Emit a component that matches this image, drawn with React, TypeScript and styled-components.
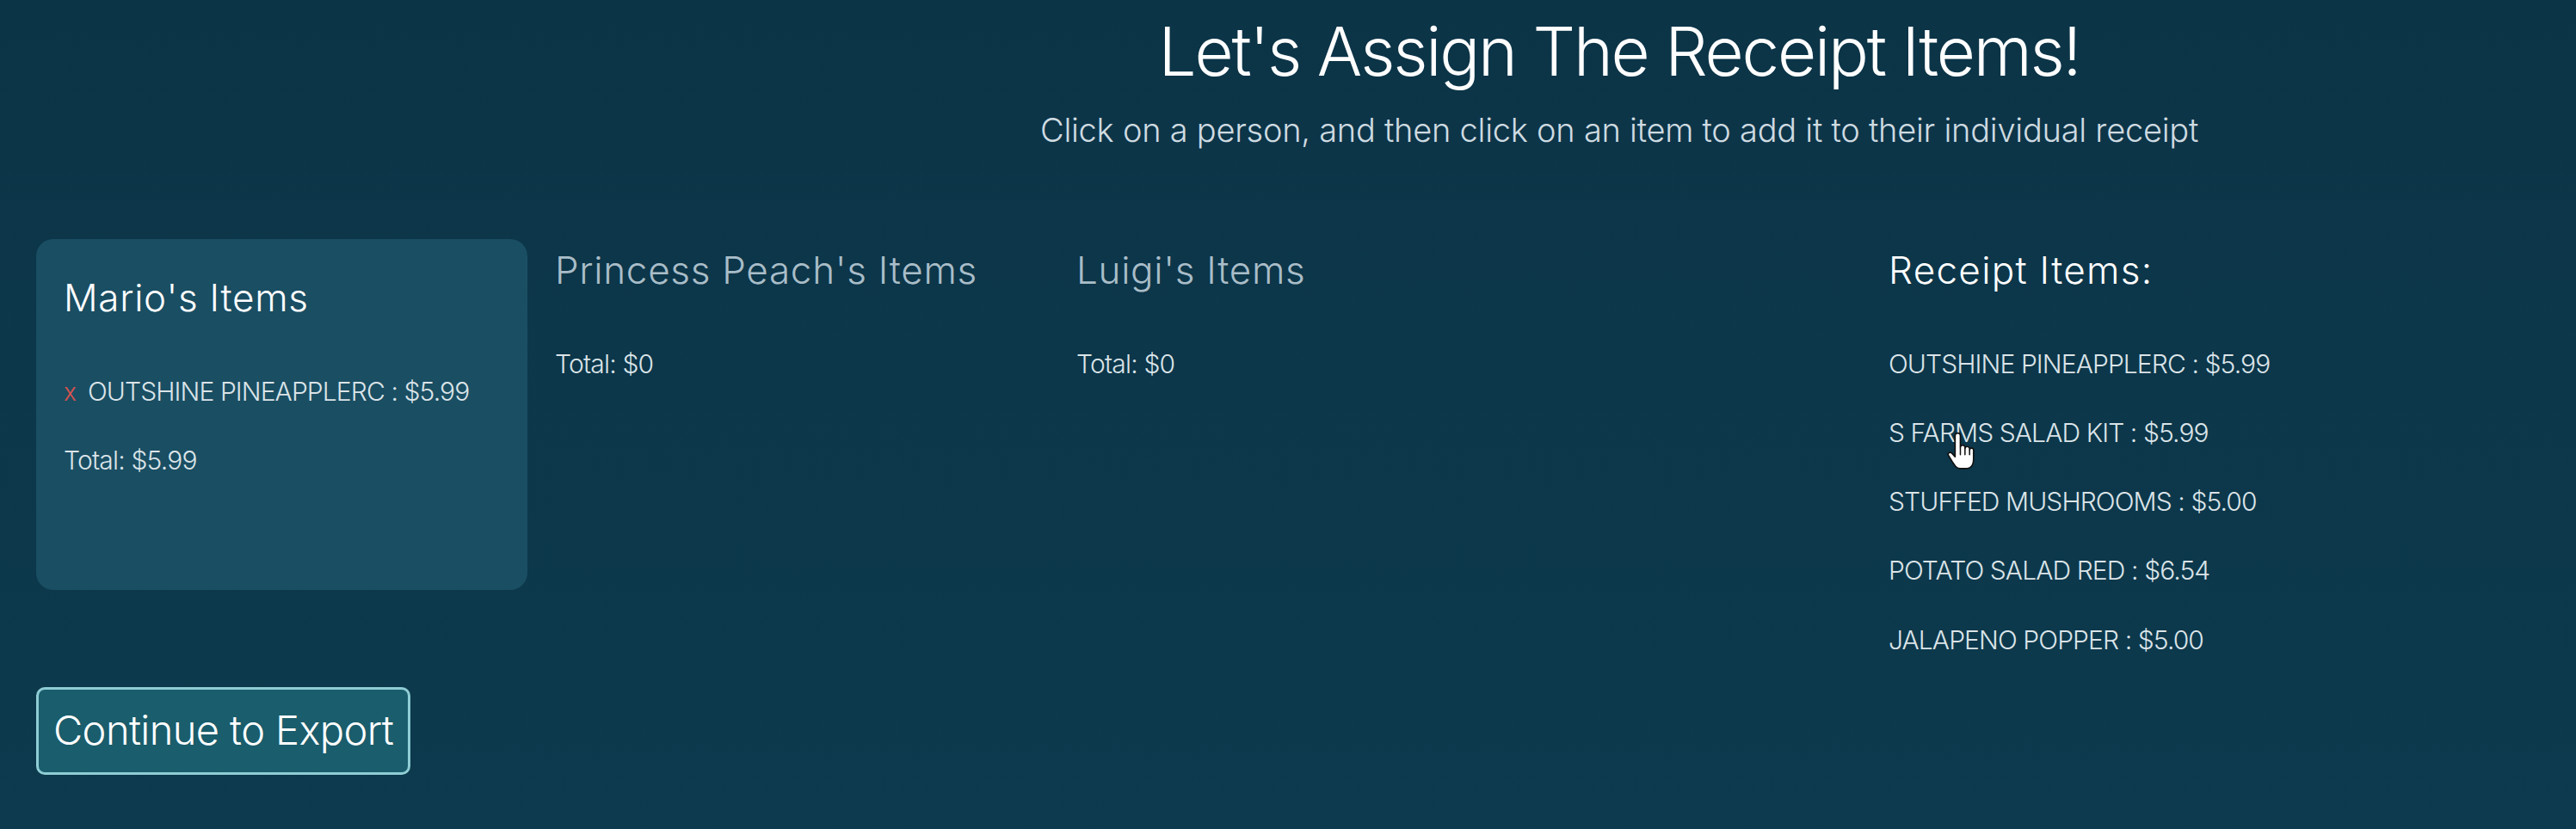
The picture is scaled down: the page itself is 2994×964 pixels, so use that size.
import React from "react";
import styled, { createGlobalStyle } from "styled-components";

const GlobalStyle = createGlobalStyle`
  html, body {
    margin: 0;
    padding: 0;
  }
  body {
    min-height: 964px;
    background: linear-gradient(180deg, #0c3447 0%, #0d3a4e 100%);
    font-family: Inter, "Noto Sans", sans-serif;
    font-weight: 300;
    color: #ffffff;
  }
`;

const Page = styled.div`
  position: relative;
  min-height: 964px;
  box-sizing: border-box;
  padding: 13px 42px 0 42px;
`;

const Header = styled.header`
  padding-left: 770px;
  text-align: center;
`;

const Title = styled.h1`
  margin: 0;
  font-size: 78px;
  font-weight: 300;
  line-height: 1.21;
  letter-spacing: -2.2px;
  color: #ffffff;
`;

const Subtitle = styled.p`
  margin: 22px 0 0;
  font-size: 38px;
  font-weight: 300;
  line-height: 1.21;
  letter-spacing: -0.25px;
  color: #cfdbe1;
`;

const Board = styled.main`
  margin-top: 103px;
  display: flex;
  align-items: flex-start;
`;

const People = styled.section`
  display: grid;
  grid-template-columns: repeat(3, 571px);
  column-gap: 35px;
  align-items: start;
`;

const PersonColumn = styled.div<{ $active?: boolean }>`
  box-sizing: border-box;
  min-height: ${(p) => (p.$active ? "408px" : "0")};
  padding: ${(p) => (p.$active ? "42px 32px 0" : "10px 0 0")};
  margin-left: ${(p) => (p.$active ? "0" : "-3px")};
  border-radius: 20px;
  background: ${(p) => (p.$active ? "#1a4e63" : "transparent")};
`;

const PersonName = styled.h2<{ $active?: boolean }>`
  margin: 0 0 63px;
  font-size: 44px;
  font-weight: 300;
  line-height: 1.21;
  letter-spacing: 0.7px;
  color: ${(p) => (p.$active ? "#ffffff" : "#a9bdc8")};
`;

const ItemRow = styled.div`
  display: flex;
  align-items: baseline;
  gap: 14px;
  margin-bottom: 44px;
  font-size: 30px;
  line-height: 1.21;
  letter-spacing: -0.9px;
  color: #dbe4e8;
`;

const RemoveMark = styled.span`
  color: #d9534f;
  font-size: 28px;
`;

const Total = styled.div`
  font-size: 30px;
  line-height: 1.21;
  letter-spacing: -0.8px;
  color: #dbe4e8;
`;

const ReceiptColumn = styled.section`
  margin-left: 370px;
  padding-top: 10px;
  display: flex;
  flex-direction: column;
`;

const ReceiptTitle = styled.h2`
  margin: 0 0 63px;
  font-size: 44px;
  font-weight: 300;
  line-height: 1.21;
  letter-spacing: 1.3px;
  color: #ffffff;
`;

const ReceiptItem = styled.div`
  margin-bottom: 44px;
  font-size: 30px;
  line-height: 1.21;
  letter-spacing: -0.9px;
  color: #dbe4e8;
  cursor: pointer;
`;

const ExportButton = styled.button`
  margin-top: 113px;
  box-sizing: border-box;
  width: 435px;
  height: 102px;
  padding: 0 0 4px 17px;
  text-align: left;
  border: 3px solid #8fcdd4;
  border-radius: 10px;
  background: #1a5d6c;
  color: #ffffff;
  font-family: Inter, "Noto Sans", sans-serif;
  font-weight: 300;
  font-size: 47px;
  letter-spacing: -0.6px;
  line-height: 1;
`;

const Cursor = styled.svg`
  position: absolute;
  left: 2261px;
  top: 502px;
  width: 38px;
  height: 46px;
  pointer-events: none;
`;

const people = [
  { name: "Mario's Items", active: true, items: [{ name: "OUTSHINE PINEAPPLERC", price: "$5.99" }], total: "$5.99" },
  { name: "Princess Peach's Items", active: false, items: [], total: "$0" },
  { name: "Luigi's Items", active: false, items: [], total: "$0" },
];

const receipt = [
  { name: "OUTSHINE PINEAPPLERC", price: "$5.99" },
  { name: "S FARMS SALAD KIT", price: "$5.99" },
  { name: "STUFFED MUSHROOMS", price: "$5.00" },
  { name: "POTATO SALAD RED", price: "$6.54" },
  { name: "JALAPENO POPPER", price: "$5.00" },
];

export default function App() {
  return (
    <>
      <GlobalStyle />
      <Page>
        <Header>
          <Title>Let's Assign The Receipt Items!</Title>
          <Subtitle>Click on a person, and then click on an item to add it to their individual receipt</Subtitle>
        </Header>
        <Board>
          <div>
            <People>
              {people.map((p) => (
                <PersonColumn key={p.name} $active={p.active}>
                  <PersonName $active={p.active}>{p.name}</PersonName>
                  {p.items.map((it) => (
                    <ItemRow key={it.name}>
                      <RemoveMark>x</RemoveMark>
                      <span>
                        {it.name} : {it.price}
                      </span>
                    </ItemRow>
                  ))}
                  <Total>Total: {p.total}</Total>
                </PersonColumn>
              ))}
            </People>
            <ExportButton>Continue to Export</ExportButton>
          </div>
          <ReceiptColumn>
            <ReceiptTitle>Receipt Items:</ReceiptTitle>
            {receipt.map((r) => (
              <ReceiptItem key={r.name}>
                {r.name} : {r.price}
              </ReceiptItem>
            ))}
          </ReceiptColumn>
        </Board>
        <Cursor viewBox="0 0 24 30">
          <path
            d="M7 3 a2 2 0 0 1 4 0 V12 a1.75 1.75 0 0 1 3.5 0 V13 a1.75 1.75 0 0 1 3.5 0 V14 a1.5 1.5 0 0 1 3 0 V21 c0 4 -2 7 -6 7 H11 c-3 0 -4 -2 -6 -5 L2 18 c-1 -1.5 1 -3 2.5 -1.8 L7 19 Z"
            fill="#ffffff"
            stroke="#111111"
            strokeWidth="1.1"
            strokeLinejoin="round"
          />
          <path d="M11 12.5 v5 M14.5 13.5 v4 M18 14.5 v3" stroke="#111111" strokeWidth="1" strokeLinecap="round" />
        </Cursor>
      </Page>
    </>
  );
}
